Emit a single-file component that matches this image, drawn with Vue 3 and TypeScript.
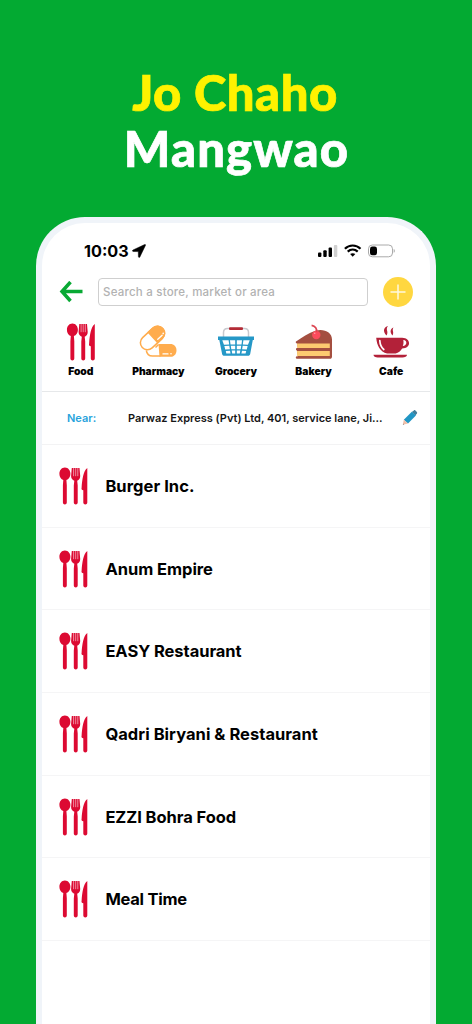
<script setup lang="ts">
interface Category {
  name: string
  kind: string
}
interface Store {
  name: string
  spacing: number
}

const categories: Category[] = [
  { name: 'Food', kind: 'food' },
  { name: 'Pharmacy', kind: 'pharmacy' },
  { name: 'Grocery', kind: 'grocery' },
  { name: 'Bakery', kind: 'bakery' },
  { name: 'Cafe', kind: 'cafe' },
]

const stores: Store[] = [
  { name: 'Burger Inc.', spacing: 0.05 },
  { name: 'Anum Empire', spacing: -0.04 },
  { name: 'EASY Restaurant', spacing: -0.05 },
  { name: 'Qadri Biryani & Restaurant', spacing: 0.04 },
  { name: 'EZZI Bohra Food', spacing: -0.06 },
  { name: 'Meal Time', spacing: -0.24 },
]
</script>

<template>
  <div class="page">
    <svg class="defs" width="0" height="0" aria-hidden="true">
      <symbol id="cutlery" viewBox="0 0 29 38">
        <g fill="#dc0a32">
          <path d="M5.900.5C9.200.5 11.400 3.400 11.400 6.900c0 2.900-1.700 5.200-4 6.100l.4 5.200V35.500c0 2.500-3.900 2.500-3.900 0V18.200l.4-5.200C2 12.100.4 9.800.4 6.900.4 3.400 2.600.5 5.900.5Z" />
          <path d="M12.800 1h7.700l.7 8c0 2.400-1.200 3.900-3 4.800l.5 4.800v16.900c0 2.500-3.900 2.500-3.900 0V18.600l.5-4.800c-1.800-.9-3.200-2.400-3.200-4.800Z" />
          <path d="M28.300 1v34.500c0 2.500-4 2.500-4 0V23.300c-1.500-.2-2.100-1.200-1.700-2.600C23.200 12.500 24.400 3.500 28.300 1Z" />
          <path d="M14.600.8v8.400M16.700.8v8.400M18.800.8v8.400" stroke="#fff" stroke-opacity=".75" stroke-width=".7" />
        </g>
      </symbol>
    </svg>

    <header class="headline">
      <div class="line-one">Jo Chaho</div>
      <div class="line-two">Mangwao</div>
    </header>

    <main class="phone">
      <div class="status">
        <span class="time">10:03</span>
        <svg class="location" width="14" height="14" viewBox="0 0 14 14">
          <path d="M12.700.5 1 6c-.9.500-.6 1.500.3 1.500l5 .1.100 5c0 1 1.100 1.100 1.500.3L13.500 1.300c.3-.6-.2-1.100-.8-.8Z" fill="#000" stroke="#000" stroke-width=".5" />
        </svg>
        <svg class="signals" width="78" height="14" viewBox="0 0 78 14">
          <rect x="0" y="8.500" width="3.400" height="4.500" rx="1" />
          <rect x="5.300" y="6.300" width="3.400" height="6.700" rx="1" />
          <rect x="10.600" y="3.600" width="3.400" height="9.400" rx="1" />
          <rect x="15.900" y="1" width="3.400" height="12" rx="1" fill="#d0d0d0" />
          <g fill="none" stroke="#000" stroke-width="2.200">
            <path d="M26.900 4.700c4.300-4.300 11.300-4.300 15.600 0" />
            <path d="M29.700 7.600c2.900-2.600 7.100-2.600 10 0" />
          </g>
          <path d="m34.700 12.700-2.600-2.600c1.500-1.300 3.700-1.300 5.200 0Z" />
          <rect x="50.500" y="1" width="24" height="11.800" rx="3.800" fill="#fff" stroke="#aaa" />
          <rect x="52" y="2.500" width="7" height="8.800" rx="2.400" />
          <path d="M75.700 5c1.500.3 1.500 3.500 0 3.800Z" fill="#aaa" />
        </svg>
      </div>

      <div class="search-row">
        <svg class="back" width="24" height="22" viewBox="0 0 24 22">
          <path d="M23.500 10.500H3M11.500 1 3 10.500l8.500 9.500" fill="none" stroke="#08a934" stroke-width="3.500" />
        </svg>
        <div class="search"><span>Search a store, market or area</span></div>
        <svg class="add" width="30" height="30" viewBox="0 0 30 30">
          <circle cx="15" cy="15" r="15" fill="#ffd740" />
          <path d="M15 7.500v15M7.500 15h15" stroke="#fff9de" stroke-width="1.500" />
        </svg>
      </div>

      <nav class="categories">
        <div v-for="c in categories" :key="c.kind" class="category">
          <svg v-if="c.kind === 'food'" class="icon" width="38" height="38" viewBox="0 0 38 38">
            <use href="#cutlery" x="4.500" y="0" width="29" height="38" />
          </svg>
          <svg v-else-if="c.kind === 'pharmacy'" class="icon" width="38" height="38" viewBox="0 0 38 38">
            <g transform="translate(13.500 15) rotate(-43)">
              <rect x="-14" y="-7" width="28" height="14" rx="7" fill="#fff" stroke="#ffac4d" stroke-width="1.500" />
              <path d="M0-7.700h7a7.700 7.700 0 0 1 0 15.400H0Z" fill="#ffac4d" />
              <path d="M3 4.500h6" stroke="#fff" stroke-width="1.300" stroke-linecap="round" />
              <circle cx="11" cy="3.900" r=".8" fill="#fff" />
            </g>
            <path d="M19.500 21H31.500c3.300 0 6 2.700 6 6.400s-2.700 6.400-6 6.400H20.500Z" fill="#ffac4d" />
            <path d="M7.300 27.300c.5 3.500 3 5.700 6.200 5.700h8M19.500 21.500l-3 3" fill="none" stroke="#ffac4d" stroke-width="1.500" />
            <path d="M24 30.900h5" stroke="#fff" stroke-width="1.300" stroke-linecap="round" />
            <circle cx="32" cy="30.700" r=".8" fill="#fff" />
          </svg>
          <svg v-else-if="c.kind === 'grocery'" class="icon" width="38" height="38" viewBox="0 0 38 38">
            <path d="M6.500 15V9.500c0-2.500 1.500-4 4-4h17c2.500 0 4 1.500 4 4V15" fill="none" stroke="#c8c9ce" stroke-width="1.500" />
            <rect x="12" y="4.300" width="14" height="2.800" rx="1" fill="#b42b36" />
            <path d="M1 13.500h36v3.500h-1.200l-2.600 14c-.3 1.200-1 1.800-2.200 1.800H7.300c-1.200 0-2-.6-2.200-1.800L2.300 17H1Z" fill="#2598c7" />
            <g fill="#fff">
              <path d="m5.300 17.200 6.300 0 .6 4.200-5.200.4Z" />
              <path d="M13 17.200h5.200v4.300l-4.700.1Z" />
              <path d="M19.800 17.200H25l-.5 4.400-4.700-.1Z" />
              <path d="M26.400 17.200h6.300l-1.700 4.600-5.200-.4Z" />
              <path d="m7.400 23.100 4.900-.3.600 3.500-4.700.3Z" />
              <path d="m13.800 22.800 4.400-.1v3.500l-3.900.1Z" />
              <path d="m19.800 22.700 4.400.1-.5 3.500-3.900-.1Z" />
              <path d="m25.700 22.800 4.900.3-.8 3.500-4.700-.3Z" />
              <path d="m8.800 27.900 4.200-.2.500 2.900-4.200-.1Z" />
              <path d="M14.700 27.500h3.500v3.100h-3Z" />
              <path d="M19.800 27.500h3.500l-.5 3.100h-3Z" />
              <path d="m25 27.700 4.200.2-.6 2.600-4.200.1Z" />
            </g>
          </svg>
          <svg v-else-if="c.kind === 'bakery'" class="icon" width="38" height="38" viewBox="0 0 38 38">
            <path d="M1 18.500C7 14.500 13 10 21 7.500c8.500-2 16 2 16 9v17c0 1.400-.8 2.300-2 2.300H1.700c-1.200 0-1.200-2.500 0-2.500H3l-1.300-6c-1-.4-1-2 0-2.400H3l-1.300-4.700C.5 19.700.5 19 1 18.500Z" fill="#a44f40" />
            <path d="M2 20.500h32.800v4.500H2.200ZM2 28h32.800v4.900H2.200Z" fill="#fdca70" />
            <circle cx="21.300" cy="12" r="4.200" fill="#fc4c5c" />
            <path d="M21.500 9c.6-3-1-6-4.900-6.700" fill="none" stroke="#dc4652" stroke-width="1.700" />
            <circle cx="19.700" cy="10.300" r=".8" fill="#ff9faa" />
          </svg>
          <svg v-else class="icon" width="38" height="38" viewBox="0 0 38 38">
            <g fill="#b32139">
              <path d="M4.200 14.700h26c8.600.2 9.700 10.300-.1 10.700-1.400 2.600-3.700 4.400-6.500 5.100h-8.500C8 28.500 5 23 4.200 14.700Z" />
              <path d="M1.500 31.800H35c0 1.900-2.100 2.600-4.600 2.600H5.700c-2.300 0-4.200-.5-4.200-2.600Z" />
              <path d="M16 3c-3 3.700 1 4.900-1.400 9.500-4.500-4.300-2.500-8.500 1.400-9.500ZM21.500 4.400c-2 3.100 1 4.200-1 8-3-3.300-2.200-6.800 1-8Z" />
            </g>
            <path d="M31.300 17c4.300-.1 4 6-.5 6 .8-1.800.9-3.800.5-6Z" fill="#fff" />
            <path d="M7.800 17.500c.2 4.300 1.500 7 4 9" fill="none" stroke="#fff" stroke-width="1.700" stroke-linecap="round" />
          </svg>
          <span class="label">{{ c.name }}</span>
        </div>
      </nav>

      <div class="near">
        <span class="near-label">Near:</span>
        <span class="address">Parwaz Express (Pvt) Ltd, 401, service lane, Ji...</span>
        <svg class="pencil" width="16" height="16" viewBox="0 0 16 16">
          <path d="M9.800 2 11.800.4c.7-.5 1.300-.3 1.900.3l1.100 1.200c.5.6.5 1.300 0 1.900l-1.500 1.600Z" fill="#427f9c" />
          <path d="M9.800 1.800 13.900 5.500 6 13.600 1.800 9.800Z" fill="#2196c4" />
          <path d="M1.800 9.800.9 14.700l5.100-1.100Z" fill="#efbea8" />
          <path d="m1.200 13.500-.3 1.200 1.200-.3Z" fill="#777" />
        </svg>
      </div>

      <section class="stores">
        <div v-for="s in stores" :key="s.name" class="store">
          <svg class="store-icon" width="29" height="38"><use href="#cutlery" width="29" height="38" /></svg>
          <span :style="{ letterSpacing: s.spacing + 'px' }">{{ s.name }}</span>
        </div>
      </section>
    </main>
  </div>
</template>

<style>
body {
  margin: 0;
  background: #03aa32;
}
</style>

<style scoped>
.page {
  width: 472px;
  height: 1024px;
  overflow: hidden;
  background: #03aa32;
  font-family: Inter, "Liberation Sans", sans-serif;
  color: #000;
  display: flex;
  flex-direction: column;
  align-items: center;
}
.defs {
  display: block;
  flex: none;
}
.headline {
  box-sizing: border-box;
  width: 100%;
  height: 217px;
  flex: none;
  padding-top: 64px;
  text-align: center;
  font: 900 49px/56px Lato, sans-serif;
  white-space: nowrap;
}
.line-one {
  color: #fff200;
  letter-spacing: 0.5px;
  padding-right: 2px;
  -webkit-text-stroke: 0.7px #fff200;
}
.line-two {
  color: #fff;
  letter-spacing: 1.1px;
  padding-left: 1px;
  -webkit-text-stroke: 0.7px #fff;
}
.phone {
  box-sizing: border-box;
  width: 400px;
  height: 807px;
  flex: none;
  border: 6px solid #f0f4f9;
  border-bottom: 0;
  border-radius: 49px 49px 0 0;
  background: #fff;
}
.status {
  box-sizing: border-box;
  height: 49px;
  padding: 7px 34px 0 42px;
  display: flex;
  align-items: center;
}
.time {
  font-size: 16.200px;
  font-weight: 700;
}
.location {
  margin-left: 3px;
}
.signals {
  margin-left: auto;
}
.search-row {
  height: 40px;
  padding: 0 17px 0 17px;
  display: flex;
  align-items: center;
}
.back {
  flex: none;
}
.search {
  box-sizing: border-box;
  width: 270px;
  height: 28px;
  margin-left: 15px;
  padding-left: 4px;
  border: 1px solid #cfcfcf;
  border-radius: 4px;
  display: flex;
  align-items: center;
  white-space: nowrap;
  font-size: 11.500px;
  font-weight: 500;
  letter-spacing: 0.220px;
  color: #b2b2b2;
}
.add {
  margin-left: auto;
}
.categories {
  box-sizing: border-box;
  height: 80px;
  padding-top: 11px;
  display: grid;
  grid-template-columns: repeat(5, 1fr);
  border-bottom: 1px solid #e6e8ea;
}
.category {
  display: flex;
  flex-direction: column;
  align-items: center;
}
.label {
  margin-top: 4px;
  font-size: 10.300px;
  line-height: 13px;
  font-weight: 900;
}
.near {
  box-sizing: border-box;
  height: 53px;
  padding: 0 12px 0 25px;
  display: flex;
  align-items: center;
  white-space: nowrap;
  font-size: 11px;
  font-weight: 600;
  border-bottom: 1px solid #f3f3f4;
}
.near-label {
  width: 61px;
  color: #28a3dc;
}
.address {
  color: #161616;
}
.pencil {
  margin-left: auto;
}
.store {
  box-sizing: border-box;
  height: 82.700px;
  padding-left: 17px;
  display: flex;
  align-items: center;
  gap: 17.400px;
  border-bottom: 1px solid #f5f5f6;
  font-size: 16.500px;
  font-weight: 700;
  white-space: nowrap;
}
</style>
